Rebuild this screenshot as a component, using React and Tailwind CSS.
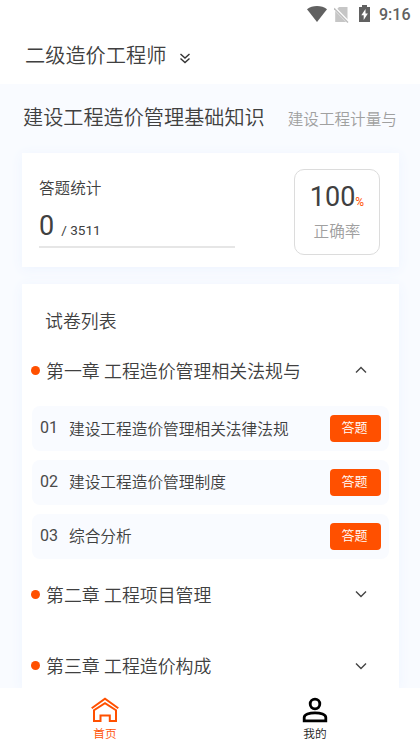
import React, { useState } from "react";

const chapters = [
  {
    title: "第一章 工程造价管理相关法规与",
    papers: ["建设工程造价管理相关法律法规", "建设工程造价管理制度", "综合分析"],
  },
  { title: "第二章 工程项目管理", papers: [] },
  { title: "第三章 工程造价构成", papers: [] },
];

function StatusBar() {
  return (
    <div className="flex h-[30px] items-center justify-end pr-[9px] text-[#616161]">
      <svg className="-mt-[2px] mr-px" width="20" height="16" viewBox="0 0 20 16" fill="currentColor">
        <path d="M0 3.2C2.8 1 6.2 0 10 0s7.200 1 10 3.200L10 16z" />
      </svg>
      <svg className="-mt-[2px] ml-[6px]" width="15" height="17" viewBox="0 0 15 17">
        <path d="M5 1h8.500v15H1.200V5z" fill="#c6c6c6" />
        <path d="M0 1.500 15 16.800" stroke="#fff" strokeWidth="3" />
        <path d="M0 2.200 14 16.500" stroke="#bdbdbd" strokeWidth="1.400" />
      </svg>
      <svg className="-mt-[3px] ml-[10px]" width="11" height="17" viewBox="0 0 11 17">
        <path d="M3 0h5v2h3v15H0V2h3z" fill="currentColor" />
        <path d="M6.500 4 2.300 10.200h2.400V15L8.900 8.400H6.500z" fill="#fff" />
      </svg>
      <span className="ml-[9px] w-[32px] text-[16px] leading-none font-medium">9:16</span>
    </div>
  );
}

function Chevron({ open }) {
  return (
    <svg width="12" height="8" viewBox="0 0 12 8" fill="none" stroke="#444" strokeWidth="1.4">
      <path d={open ? "M1 6.500 6 1.500l5 5" : "M1 1.500l5 5 5-5"} />
    </svg>
  );
}

function PaperRow({ number, title }) {
  return (
    <div className="flex h-[45px] items-center rounded-lg bg-[#f9fbff] pr-2 pl-2">
      <span className="w-[29px] text-[16px] leading-none font-normal text-[#4a4a4a]">{number}</span>
      <span className="flex-1 pt-[2px] text-[15.7px] leading-none whitespace-nowrap">{title}</span>
      <button className="h-[27px] w-[51px] rounded-[4px] bg-[#ff5000] pr-[7px] pb-[2px] pl-[5px] text-[13px] leading-none text-white">
        答题
      </button>
    </div>
  );
}

function Chapter({ title, papers, open, onToggle }) {
  return (
    <section>
      <button onClick={onToggle} className="flex h-[71.6px] w-full items-center pr-[22px] text-left">
        <i className="-ml-px h-[9px] w-[9px] rounded-full bg-[#ff5000]" />
        <span className="ml-[6px] flex-1 pt-[2.6px] text-[17.9px] leading-none whitespace-nowrap">{title}</span>
        <Chevron open={open} />
      </button>
      {open && papers.length > 0 && (
        <div className="flex flex-col gap-[8.8px]">
          {papers.map((paper, i) => (
            <PaperRow key={paper} number={`0${i + 1}`} title={paper} />
          ))}
        </div>
      )}
    </section>
  );
}

function TabBar() {
  return (
    <nav className="grid h-[60px] shrink-0 grid-cols-2 bg-white text-[11.7px] leading-none">
      <div className="flex flex-col items-center pt-[9px] text-[#ff5000]">
        <svg width="28" height="26" viewBox="0 0 28 26" fill="none" stroke="currentColor" strokeWidth="2">
          <path d="M.7 11.200 14 1.800l13.300 9.400" />
          <path d="M3 24V13.200L14 6.200l11 7V24h-6.200v-5.500H9.500V24z" />
        </svg>
        <span className="mt-[6px]">首页</span>
      </div>
      <div className="flex flex-col items-center pt-[9px] text-[#222]">
        <svg width="26" height="26" viewBox="0 0 26 26" fill="none" stroke="#000" strokeWidth="2.8">
          <circle cx="13" cy="7" r="4.8" />
          <path d="M2.200 23.800v-3.300c0-2.900 5-4.700 10.800-4.700s10.800 1.800 10.800 4.700v3.300z" />
        </svg>
        <span className="mt-[6px]">我的</span>
      </div>
    </nav>
  );
}

export default function App() {
  const [openIndex, setOpenIndex] = useState(0);

  return (
    <div className="flex h-[748px] w-[420px] flex-col overflow-hidden bg-[#f9fbff] font-['Roboto','Noto_Sans_CJK_SC',sans-serif] font-[350] text-[#404040]">
      <header className="h-[84px] shrink-0 bg-white">
        <StatusBar />
        <div className="flex h-[50px] items-center pl-[25px]">
          <h1 className="pt-[2px] text-[20.2px] leading-none">二级造价工程师</h1>
          <svg className="mt-[6px] ml-[14px]" width="10" height="11" viewBox="0 0 10 11" fill="none" stroke="#333" strokeWidth="1.4">
            <path d="M.5 1 5 5l4.500-4M.5 5.500l4.500 4 4.500-4" />
          </svg>
        </div>
      </header>

      <main className="flex min-h-0 flex-1 flex-col overflow-hidden">
        <div className="flex h-[69px] shrink-0 items-center pl-[23px] whitespace-nowrap">
          <h2 className="text-[20.15px] leading-none">建设工程造价管理基础知识</h2>
          <span className="mt-[4px] ml-[23px] text-[15.6px] leading-none text-[#a0a0a0]">建设工程计量与</span>
        </div>

        <section className="mr-[21px] ml-[22px] flex h-[114px] shrink-0 justify-between bg-white pt-4 pr-[19px] pl-[17px] shadow-[0_2px_12px_#edf4ff]">
          <div className="w-[196px] pt-3">
            <h3 className="text-[15.6px] leading-4">答题统计</h3>
            <div className="mt-[9px] flex h-[42px] items-baseline border-b-2 border-[#e6e6e6] font-normal">
              <span className="text-[27px] leading-[40px]">0</span>
              <span className="ml-[7px] text-[13.6px]">/ 3511</span>
            </div>
          </div>
          <div className="flex h-[86px] w-[86px] flex-col items-center rounded-[10px] border border-[#dcdcdc] pt-[11px]">
            <div className="flex items-baseline font-normal">
              <span className="text-[27px] leading-[32px]">100</span>
              <span className="text-[12px] text-[#ff5000]">%</span>
            </div>
            <span className="mt-[11px] text-[15.6px] leading-4 text-[#a0a0a0]">正确率</span>
          </div>
        </section>

        <section className="mt-[17px] mr-[21px] ml-[22px] min-h-0 flex-1 bg-white px-[10px] shadow-[0_2px_12px_#edf4ff]">
          <h3 className="mt-[28px] ml-[13px] text-[17.9px] leading-[20px]">试卷列表</h3>
          <div className="mt-[2.4px]">
            {chapters.map((chapter, i) => (
              <Chapter
                key={chapter.title}
                {...chapter}
                open={openIndex === i}
                onToggle={() => setOpenIndex(openIndex === i ? -1 : i)}
              />
            ))}
          </div>
        </section>
      </main>

      <TabBar />
    </div>
  );
}
